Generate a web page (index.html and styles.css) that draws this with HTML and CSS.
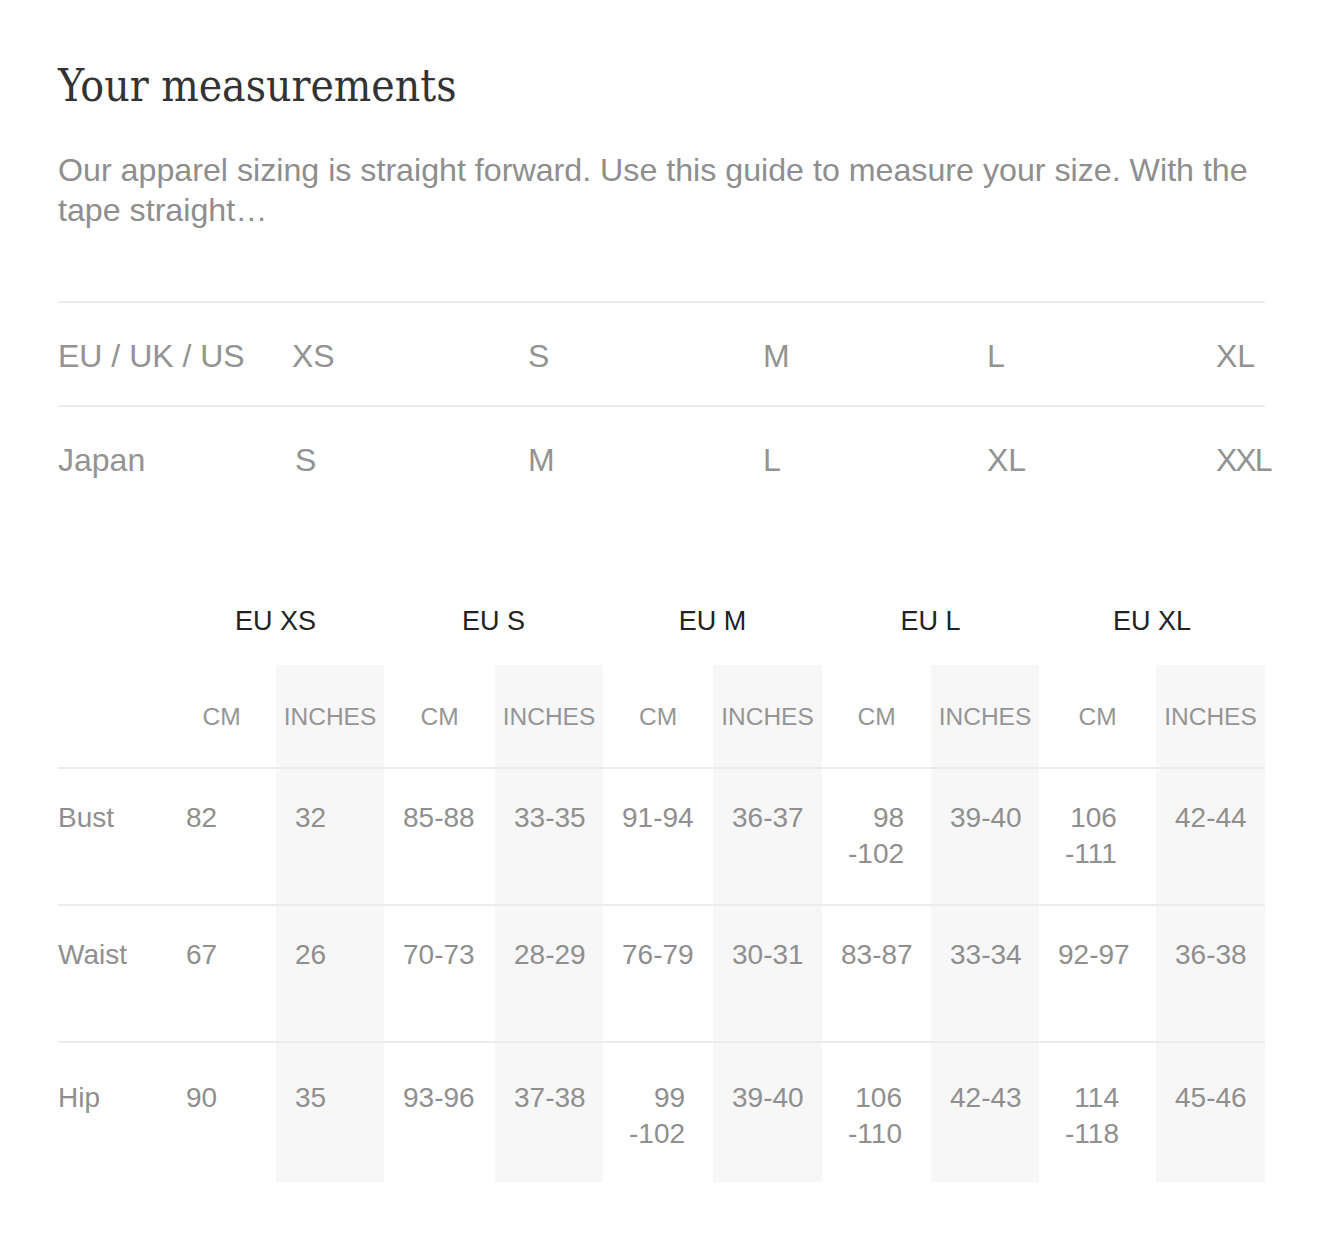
FILE: index.html
```html
<!DOCTYPE html>
<html lang="en">
<head>
<meta charset="utf-8">
<title>Your measurements</title>
<link rel="stylesheet" href="styles.css">
</head>
<body>
<main class="page">
  <h1 class="title">Your measurements</h1>
  <p class="intro">Our apparel sizing is straight forward. Use this guide to measure your size. With the tape straight…</p>

  <section class="size-map">
    <div class="map-row">
      <div class="map-label">EU / UK / US</div>
      <div>XS</div><div>S</div><div>M</div><div>L</div><div>XL</div>
    </div>
    <div class="map-row">
      <div class="map-label">Japan</div>
      <div class="j1">S</div><div>M</div><div>L</div><div>XL</div><div class="tight">XXL</div>
    </div>
  </section>

  <section class="chart">
    <div class="chart-row groups">
      <div></div>
      <div class="group">EU XS</div>
      <div class="group">EU S</div>
      <div class="group">EU M</div>
      <div class="group">EU L</div>
      <div class="group">EU XL</div>
    </div>
    <div class="chart-row units">
      <div></div>
      <div class="unit">CM</div><div class="unit band">INCHES</div>
      <div class="unit">CM</div><div class="unit band">INCHES</div>
      <div class="unit">CM</div><div class="unit band">INCHES</div>
      <div class="unit">CM</div><div class="unit band">INCHES</div>
      <div class="unit">CM</div><div class="unit band">INCHES</div>
    </div>
    <div class="chart-row data">
      <div class="label">Bust</div>
      <div class="val">82</div><div class="val band">32</div>
      <div class="val">85-88</div><div class="val band">33-35</div>
      <div class="val">91-94</div><div class="val band">36-37</div>
      <div class="val"><span class="stack">98<br>-102</span></div><div class="val band">39-40</div>
      <div class="val"><span class="stack">106<br>-111</span></div><div class="val band">42-44</div>
    </div>
    <div class="chart-row data">
      <div class="label">Waist</div>
      <div class="val">67</div><div class="val band">26</div>
      <div class="val">70-73</div><div class="val band">28-29</div>
      <div class="val">76-79</div><div class="val band">30-31</div>
      <div class="val">83-87</div><div class="val band">33-34</div>
      <div class="val">92-97</div><div class="val band">36-38</div>
    </div>
    <div class="chart-row data last">
      <div class="label">Hip</div>
      <div class="val">90</div><div class="val band">35</div>
      <div class="val">93-96</div><div class="val band">37-38</div>
      <div class="val"><span class="stack">99<br>-102</span></div><div class="val band">39-40</div>
      <div class="val"><span class="stack">106<br>-110</span></div><div class="val band">42-43</div>
      <div class="val"><span class="stack">114<br>-118</span></div><div class="val band">45-46</div>
    </div>
  </section>
</main>
</body>
</html>
```
FILE: styles.css
```css
html, body {
  margin: 0;
  padding: 0;
  background: #ffffff;
}

body {
  font-family: "Liberation Sans", Arial, sans-serif;
  color: #8f8f8f;
}

.page {
  width: 1207px;
  padding: 58px 62px 0 58px;
}

.title {
  margin: 0;
  font-family: "DejaVu Serif", serif;
  font-stretch: condensed;
  font-weight: normal;
  font-size: 44px;
  line-height: 56px;
  color: #333333;
}

.intro {
  margin: 36px 0 0 0;
  font-size: 32.2px;
  line-height: 40px;
  color: #8e8e8e;
}

.size-map {
  margin-top: 71px;
}

.map-row {
  display: grid;
  grid-template-columns: 234px 236px 235px 224px 229px 49px;
  align-items: center;
  box-sizing: border-box;
  height: 104px;
  padding-top: 4px;
  border-top: 2px solid #ececec;
  font-size: 32px;
  color: #939393;
  white-space: nowrap;
}

.map-row .j1 {
  padding-left: 3px;
}

.map-row .tight {
  letter-spacing: -2px;
}

.chart {
  margin-top: 68px;
}

.chart-row {
  display: grid;
  grid-template-columns: 109px 109px 108px 111px 108px 110px 109px 109px 108px 117px 109px;
}

.groups {
  height: 88px;
  align-items: center;
}

.group {
  grid-column: span 2;
  text-align: center;
  font-size: 27px;
  color: #222222;
}

.units {
  height: 102px;
}

.unit {
  display: flex;
  align-items: center;
  justify-content: center;
  padding-top: 2px;
  font-size: 24.5px;
  color: #959595;
}

.band {
  background: #f7f7f7;
}

.data {
  height: 135px;
  border-top: 2px solid #ececec;
  font-size: 28px;
  line-height: 36px;
}

.data.last {
  height: 139px;
}

.data > div {
  padding-top: 31px;
}

.data.last > div {
  padding-top: 37px;
}

.label {
  color: #8f8f8f;
}

.val {
  padding-left: 19px;
  color: #8f8f8f;
}

.stack {
  display: inline-block;
  text-align: right;
  margin-left: 7px;
}
```
